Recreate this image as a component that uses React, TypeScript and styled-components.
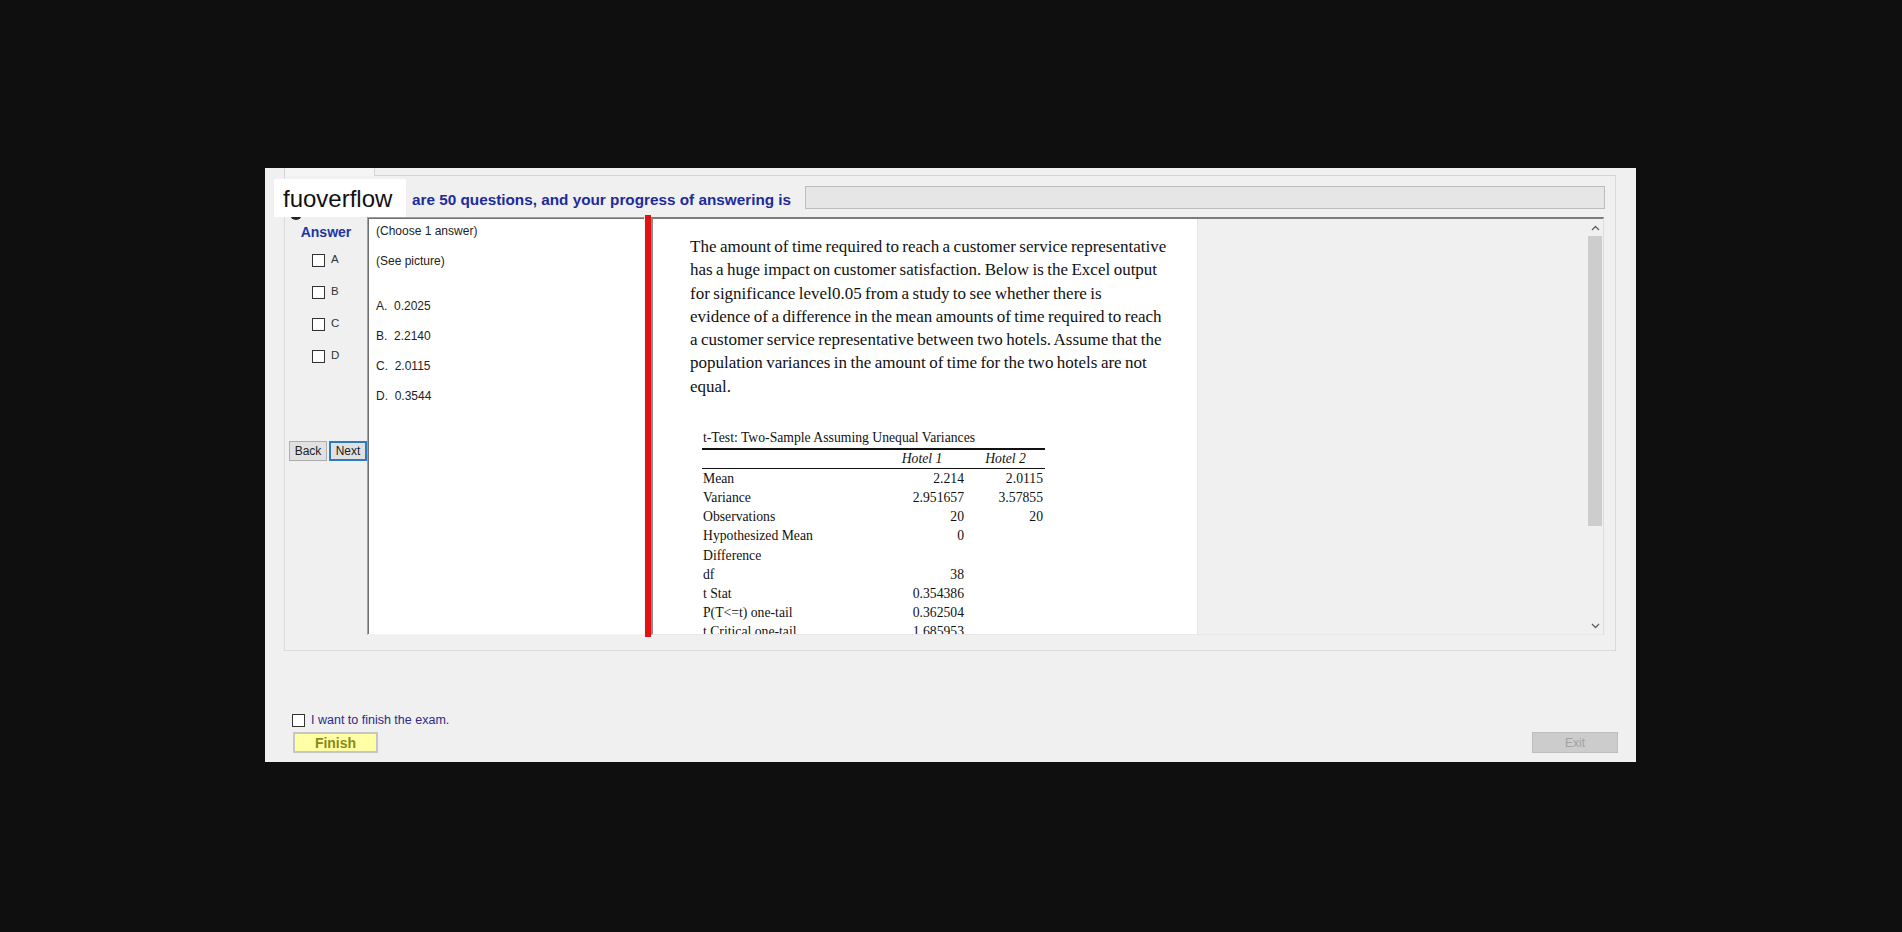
import React from "react";
import styled, { createGlobalStyle } from "styled-components";

const GlobalStyle = createGlobalStyle`
  html, body { margin: 0; padding: 0; background: #0f0f0f; }
  body { font-family: "Liberation Sans", Arial, sans-serif; }
  * { box-sizing: border-box; }
`;

const Screen = styled.div`
  width: 1902px;
  height: 932px;
  background: #0f0f0f;
  padding: 168px 0 0 265px;
  overflow: hidden;
`;

const Window = styled.div`
  position: relative;
  width: 1371px;
  height: 594px;
  background: #f0f0f0;
  display: flex;
  flex-direction: column;
`;

const Watermark = styled.div`
  position: absolute;
  left: 9px;
  top: 11px;
  width: 132px;
  height: 38px;
  background: #ffffff;
  color: #111;
  font-family: "Liberation Sans", Arial, sans-serif;
  font-size: 24px;
  line-height: 40px;
  padding-left: 9px;
  z-index: 3;
`;

const HiddenDot = styled.div`
  position: absolute;
  left: 25px;
  top: 40px;
  width: 12px;
  height: 12px;
  border-radius: 50%;
  background: #222;
  z-index: 2;
`;

const TabStrip = styled.div`
  margin-left: 19px;
  width: 1332px;
  height: 8px;
  display: flex;
`;

const TabHeader = styled.div`
  width: 91px;
  border-left: 1px solid #d3d3d3;
  border-right: 1px solid #d3d3d3;
  background: #f5f5f5;
`;

const TabStripRest = styled.div`
  flex: 1;
  border-bottom: 1px solid #d3d3d3;
`;

const TabPage = styled.div`
  margin-left: 19px;
  width: 1332px;
  height: 475px;
  border: 1px solid #dadada;
  border-top: none;
  display: flex;
  flex-direction: column;
`;

const HeaderRow = styled.div`
  height: 41px;
  display: flex;
  align-items: flex-start;
  padding: 10px 10px 0 127px;
`;

const HeaderText = styled.div`
  font-weight: bold;
  font-size: 15.3px;
  line-height: 23px;
  padding-top: 2px;
  color: #1d2b9c;
  white-space: nowrap;
`;

const ProgressBar = styled.div`
  margin-left: auto;
  width: 800px;
  height: 23px;
  background: #e6e6e6;
  border: 1px solid #bcbcbc;
`;

const MainRow = styled.div`
  height: 418px;
  display: flex;
`;

const AnswerCol = styled.div`
  width: 82px;
  display: flex;
  flex-direction: column;
`;

const AnswerLabel = styled.div`
  margin-top: 5px;
  line-height: 20px;
  font-size: 14px;
  font-weight: bold;
  color: #1d35a3;
  text-align: center;
`;

const ChoiceList = styled.div`
  margin-top: 12px;
  padding-left: 27px;
  display: flex;
  flex-direction: column;
  gap: 19px;
`;

const ChoiceRow = styled.div`
  display: flex;
  align-items: flex-start;
  height: 13px;
`;

const Box = styled.span`
  display: inline-block;
  width: 13px;
  height: 13px;
  background: #fff;
  border: 1px solid #333;
  flex: none;
`;

const ChoiceLetter = styled.span`
  margin-left: 6px;
  margin-top: -1px;
  font-size: 11.5px;
  line-height: 12px;
  color: #333;
`;

const NavButtons = styled.div`
  margin-top: 78px;
  padding-left: 4px;
  display: flex;
  gap: 2px;
`;

const NavButton = styled.button<{ $focused?: boolean }>`
  width: 38px;
  height: 20px;
  padding: 0;
  font-family: "Liberation Sans", Arial, sans-serif;
  font-size: 12px;
  color: #222;
  background: #e1e1e1;
  border: ${(p) => (p.$focused ? "2px solid #2a7bc4" : "1px solid #adadad")};
`;

const OptionsPanel = styled.div`
  width: 278px;
  background: #fff;
  border-top: 1px solid #a0a0a0;
  border-left: 1px solid #a0a0a0;
  border-right: 1px solid #f4f4f4;
  border-bottom: 1px solid #f4f4f4;
  box-shadow: inset 1px 1px 0 #6f6f6f;
  padding: 3px 0 0 8px;
  display: flex;
  flex-direction: column;
  gap: 10px;
`;

const OptionLine = styled.div<{ $gapBefore?: boolean }>`
  font-size: 12px;
  line-height: 20px;
  color: #222;
  white-space: pre;
  margin-top: ${(p) => (p.$gapBefore ? "15px" : "0")};
`;

const Splitter = styled.div`
  width: 6px;
  margin: -2px 0 -2px 0;
  background: #e01212;
`;

const QuestionArea = styled.div`
  flex: 1;
  margin-right: 11px;
  display: flex;
  border-top: 2px solid #7c7c7c;
  border-left: 2px solid #8a8a8a;
  border-right: 1px solid #dcdcdc;
  border-bottom: 1px solid #e8e8e8;
`;

const Viewport = styled.div`
  flex: 1;
  overflow: hidden;
  background: #f0f0f0;
`;

const Page = styled.div`
  width: 545px;
  background: #fff;
  border-right: 1px solid #e4e4e4;
  padding: 16px 0 0 37px;
  height: 700px;
`;

const Paragraph = styled.p`
  margin: 0;
  font-family: "Liberation Serif", "Times New Roman", serif;
  font-size: 17px;
  line-height: 23.25px;
  word-spacing: -0.8px;
  color: #111;
  white-space: nowrap;
`;

const StatTable = styled.table`
  margin: 30px 0 0 12px;
  width: 343px;
  border-collapse: collapse;
  font-family: "Liberation Serif", "Times New Roman", serif;
  font-size: 13.7px;
  color: #111;
  td {
    padding: 0;
    white-space: nowrap;
  }
`;

const TitleCell = styled.td`
  height: 20px;
  line-height: 20px;
  border-bottom: 2px solid #111;
  padding-left: 1px !important;
`;

const HeadCell = styled.td<{ $w: number }>`
  width: ${(p) => p.$w}px;
  height: 18px;
  line-height: 18px;
  font-style: italic;
  text-align: center;
  border-bottom: 1px solid #111;
`;

const Cell = styled.td<{ $num?: boolean }>`
  height: 19.2px;
  line-height: 19.2px;
  text-align: ${(p) => (p.$num ? "right" : "left")};
  padding-right: ${(p) => (p.$num ? "2px" : "0")} !important;
  padding-left: ${(p) => (p.$num ? "0" : "1px")} !important;
`;

const ScrollBar = styled.div`
  width: 16px;
  background: #f0f0f0;
  display: flex;
  flex-direction: column;
  align-items: center;
`;

const ScrollArrow = styled.div`
  height: 17px;
  width: 16px;
  display: flex;
  align-items: center;
  justify-content: center;
`;

const Thumb = styled.div`
  width: 14px;
  height: 290px;
  background: #cdcdcd;
`;

const ScrollSpace = styled.div`
  flex: 1;
`;

const BottomBar = styled.div`
  flex: 1;
  display: flex;
  justify-content: space-between;
  align-items: flex-end;
  padding: 0 18px 9px 27px;
`;

const FinishGroup = styled.div`
  display: flex;
  flex-direction: column;
  gap: 5px;
`;

const ConfirmRow = styled.label`
  display: flex;
  align-items: center;
  height: 13px;
`;

const ConfirmText = styled.span`
  margin-left: 6px;
  font-size: 12.5px;
  line-height: 13px;
  color: #2b2b8c;
`;

const FinishButton = styled.button`
  margin-left: 1px;
  width: 85px;
  height: 21px;
  padding: 0;
  background: #ffffa6;
  border: 2px solid #c6c6c6;
  font-family: "Liberation Sans", Arial, sans-serif;
  font-weight: bold;
  font-size: 14px;
  color: #8a8a12;
`;

const ExitButton = styled.button`
  width: 86px;
  height: 21px;
  padding: 0;
  background: #cccccc;
  border: 1px solid #bdbdbd;
  font-family: "Liberation Sans", Arial, sans-serif;
  font-size: 12px;
  color: #a2a2a2;
`;

const Chevron = ({ up }: { up?: boolean }) => (
  <svg width="9" height="6" viewBox="0 0 9 6">
    <path
      d={up ? "M1 5 L4.5 1.5 L8 5" : "M1 1 L4.5 4.5 L8 1"}
      fill="none"
      stroke="#606060"
      strokeWidth="1.3"
    />
  </svg>
);

const questionLines = [
  "The amount of time required to reach a customer service representative",
  "has a huge impact on customer satisfaction. Below is the Excel output",
  "for significance level0.05 from a study to see whether there is",
  "evidence of a difference in the mean amounts of time required to reach",
  "a customer service representative between two hotels. Assume that the",
  "population variances in the amount of time for the two hotels are not",
  "equal.",
];

const rows: [string, string, string][] = [
  ["Mean", "2.214", "2.0115"],
  ["Variance", "2.951657", "3.57855"],
  ["Observations", "20", "20"],
  ["Hypothesized Mean", "0", ""],
  ["Difference", "", ""],
  ["df", "38", ""],
  ["t Stat", "0.354386", ""],
  ["P(T<=t) one-tail", "0.362504", ""],
  ["t Critical one-tail", "1.685953", ""],
];

const options = ["A.  0.2025", "B.  2.2140", "C.  2.0115", "D.  0.3544"];

export default function App() {
  return (
    <>
      <GlobalStyle />
      <Screen>
        <Window>
          <HiddenDot />
          <Watermark>fuoverflow</Watermark>
          <TabStrip>
            <TabHeader />
            <TabStripRest />
          </TabStrip>
          <TabPage>
            <HeaderRow>
              <HeaderText>are 50 questions, and your progress of answering is</HeaderText>
              <ProgressBar />
            </HeaderRow>
            <MainRow>
              <AnswerCol>
                <AnswerLabel>Answer</AnswerLabel>
                <ChoiceList>
                  {["A", "B", "C", "D"].map((l) => (
                    <ChoiceRow key={l}>
                      <Box />
                      <ChoiceLetter>{l}</ChoiceLetter>
                    </ChoiceRow>
                  ))}
                </ChoiceList>
                <NavButtons>
                  <NavButton>Back</NavButton>
                  <NavButton $focused>Next</NavButton>
                </NavButtons>
              </AnswerCol>
              <OptionsPanel>
                <OptionLine>(Choose 1 answer)</OptionLine>
                <OptionLine>(See picture)</OptionLine>
                {options.map((o, i) => (
                  <OptionLine key={o} $gapBefore={i === 0}>
                    {o}
                  </OptionLine>
                ))}
              </OptionsPanel>
              <Splitter />
              <QuestionArea>
                <Viewport>
                  <Page>
                    <Paragraph>
                      {questionLines.map((line, i) => (
                        <React.Fragment key={i}>
                          {line}
                          {i < questionLines.length - 1 && <br />}
                        </React.Fragment>
                      ))}
                    </Paragraph>
                    <StatTable>
                      <tbody>
                        <tr>
                          <TitleCell colSpan={3}>t-Test: Two-Sample Assuming Unequal Variances</TitleCell>
                        </tr>
                        <tr>
                          <HeadCell $w={176}></HeadCell>
                          <HeadCell $w={88}>Hotel 1</HeadCell>
                          <HeadCell $w={79}>Hotel 2</HeadCell>
                        </tr>
                        {rows.map((r) => (
                          <tr key={r[0]}>
                            <Cell>{r[0]}</Cell>
                            <Cell $num>{r[1]}</Cell>
                            <Cell $num>{r[2]}</Cell>
                          </tr>
                        ))}
                      </tbody>
                    </StatTable>
                  </Page>
                </Viewport>
                <ScrollBar>
                  <ScrollArrow>
                    <Chevron up />
                  </ScrollArrow>
                  <Thumb />
                  <ScrollSpace />
                  <ScrollArrow>
                    <Chevron />
                  </ScrollArrow>
                </ScrollBar>
              </QuestionArea>
            </MainRow>
          </TabPage>
          <BottomBar>
            <FinishGroup>
              <ConfirmRow>
                <Box />
                <ConfirmText>I want to finish the exam.</ConfirmText>
              </ConfirmRow>
              <FinishButton>Finish</FinishButton>
            </FinishGroup>
            <ExitButton>Exit</ExitButton>
          </BottomBar>
        </Window>
      </Screen>
    </>
  );
}
